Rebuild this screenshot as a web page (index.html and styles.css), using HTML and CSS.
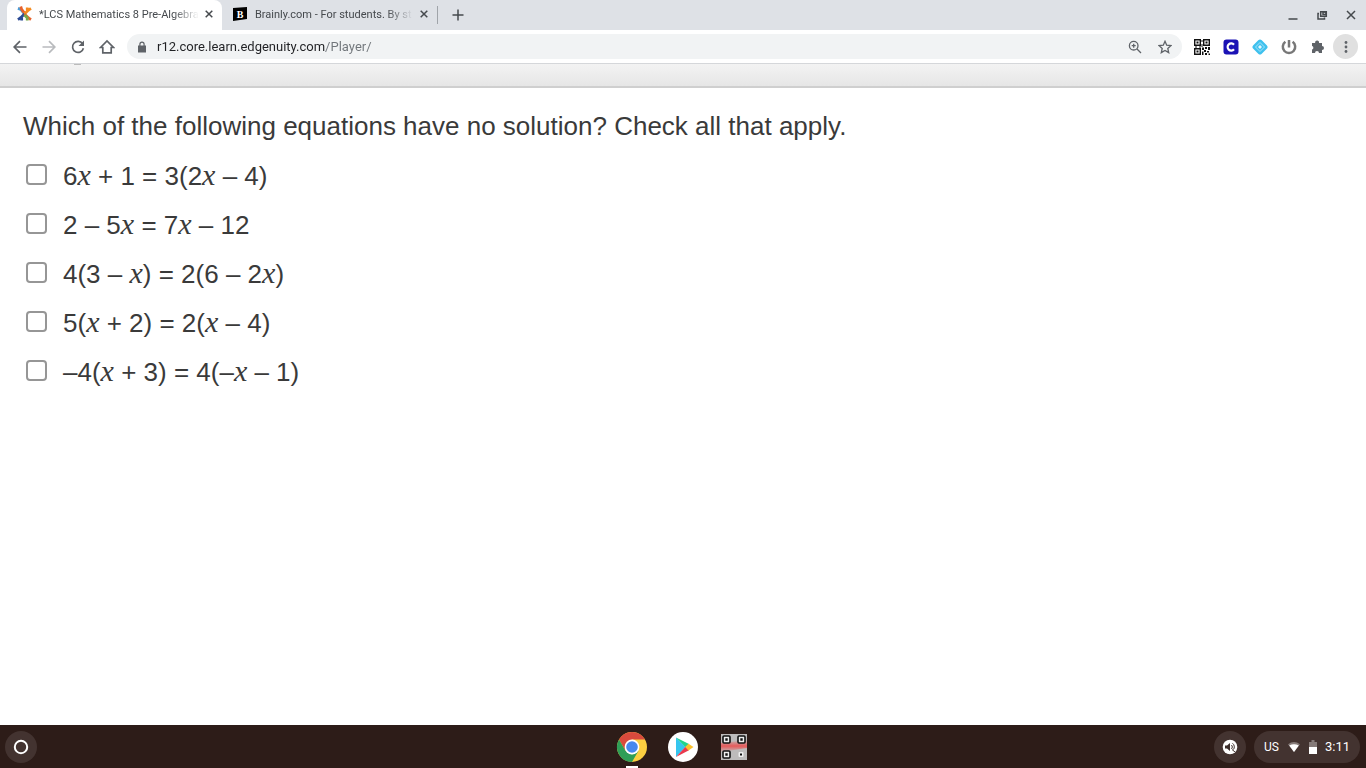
FILE: index.html
```html
<!DOCTYPE html>
<html lang="en">
<head>
    <meta charset="UTF-8">
    <meta name="viewport" content="width=device-width, initial-scale=1.0">
    <title>LCS Mathematics 8 Pre-Algebra</title>
    <link rel="stylesheet" href="styles.css">
</head>
<body>

<header class="tab-strip">
    <div class="tab active">
        <svg class="favicon" viewBox="0 0 16 16" fill="none" stroke-width="3">
            <path d="M1 2 4 3 8 8" stroke="#4b9bd6"/>
            <path d="M4 0 5 3 8 7" stroke="#e8622c"/>
            <path d="M15 2 12 4 8 8M11 1 11 4" stroke="#f58b1f"/>
            <path d="M1 14 4 12 8 8M5 15 5 12" stroke="#2b4a94"/>
            <path d="M15 14 12 12 8 8" stroke="#e8622c"/>
            <path d="M11 15 11 12 8 9" stroke="#79a94c"/>
        </svg>
        <span class="tab-title">*LCS Mathematics 8 Pre-Algebra</span>
        <button class="tab-close" aria-label="Close tab">
            <svg viewBox="0 0 8 8"><path d="M.7.7 7.3 7.3M7.3.7.7 7.3"/></svg>
        </button>
    </div>
    <div class="tab">
        <svg class="favicon" viewBox="0 0 16 16">
            <path d="M1 2 15 1V13L1 15Z" fill="#000"/>
            <text x="8" y="12" class="brainly-b">B</text>
        </svg>
        <span class="tab-title">Brainly.com - For students. By st</span>
        <button class="tab-close" aria-label="Close tab">
            <svg viewBox="0 0 8 8"><path d="M.7.7 7.3 7.3M7.3.7.7 7.3"/></svg>
        </button>
    </div>
    <button class="new-tab" aria-label="New tab">
        <svg viewBox="0 0 12 12"><path d="M6 .5V11.5M.5 6H11.5"/></svg>
    </button>
    <div class="window-buttons">
        <button aria-label="Minimize"><svg viewBox="0 0 12 12"><path d="M1.5 10H10.5"/></svg></button>
        <button aria-label="Restore"><svg viewBox="0 0 12 12"><path d="M4.7 2.7H10.3V7.3H4.7ZM3 4.5H2V10H8.5V8.5"/><path d="M7 3H10V5.5H7Z"/></svg></button>
        <button aria-label="Close"><svg viewBox="0 0 12 12"><path d="M2 2 10 10M10 2 2 10"/></svg></button>
    </div>
</header>

<nav class="toolbar">
    <div class="nav-buttons">
        <button aria-label="Back"><svg viewBox="0 0 16 16"><path d="M14.5 8H2.5M8 2.2 2.2 8 8 13.8"/></svg></button>
        <button class="off" aria-label="Forward" disabled><svg viewBox="0 0 16 16"><path d="M1.5 8H13.5M8 2.2 13.8 8 8 13.8"/></svg></button>
        <button aria-label="Reload"><svg viewBox="0 0 16 16"><path d="M12.6 4.8A5.5 5.5 0 1 0 13.4 9.2"/><path d="M14 1.5V7H8.5Z" fill="#5f6368" stroke="none"/></svg></button>
        <button aria-label="Home"><svg viewBox="0 0 16 16"><path d="M1.5 8.5 8 2 14.5 8.5H12.2V13.8H3.8V8.5Z"/></svg></button>
    </div>
    <div class="omnibox">
        <svg class="lock" viewBox="0 0 10 12"><path d="M1 4.5H9V11.5H1Z" fill="#5f6368"/><path d="M2.9 5V3.2A2.1 2.1 0 0 1 7.1 3.2V5" fill="none" stroke="#5f6368" stroke-width="1.2"/></svg>
        <input class="url" type="text" aria-label="Address" value="r12.core.learn.edgenuity.com/Player/">
        <button aria-label="Zoom"><svg viewBox="0 0 14 14"><circle cx="5.7" cy="5.7" r="4.3"/><path d="M9 9 13 13M3.7 5.7H7.7M5.7 3.7V7.7"/></svg></button>
        <button aria-label="Bookmark"><svg viewBox="0 0 14 14"><path d="M7 1.3 8.7 5.2 13 5.6 9.8 8.4 10.7 12.6 7 10.4 3.3 12.6 4.2 8.4 1 5.6 5.3 5.2Z"/></svg></button>
    </div>
    <div class="extensions">
        <button aria-label="QR code">
            <svg viewBox="0 0 16 16" fill="#111">
                <path fill-rule="evenodd" d="M0 0H7V7H0ZM1.4 1.4V5.6H5.6V1.4ZM9 0H16V7H9ZM10.4 1.4V5.6H14.6V1.4ZM0 9H7V16H0ZM1.4 10.4V14.6H5.6V10.4Z"/>
                <path d="M2.5 2.5H4.5V4.5H2.5ZM11.5 2.5H13.5V4.5H11.5ZM2.5 11.5H4.5V13.5H2.5ZM7.5 1H8.5V3H7.5ZM7.5 5H8.5V8H7.5ZM1 7.5H3V8.5H1ZM5 7.5H7V8.5H5ZM8 8.5H10V11H8ZM11 8H13V10H11ZM14 8H16V11H14ZM10 11H12V13H10ZM13 12H15V13.5H13ZM8 12.5H9.5V16H8ZM11 14H13V16H11ZM14.5 14.5H16V16H14.5Z"/>
            </svg>
        </button>
        <button aria-label="Clever">
            <svg viewBox="0 0 16 16"><rect x=".5" y=".5" width="15" height="15" rx="3" fill="#1b12b5"/><path d="M11 5.7A3.6 3.6 0 1 0 11 10.3" fill="none" stroke="#fff" stroke-width="2.2"/></svg>
        </button>
        <button aria-label="Diamond">
            <svg viewBox="0 0 16 16"><rect x="2" y="2" width="12" height="12" rx="2.5" transform="rotate(45 8 8)" fill="#3fc1ee"/><path d="M8 3.5 12.5 8 8 12.5 3.5 8Z" fill="none" stroke="#a5e3f8"/><path d="M8 6 10 8 8 10 6 8Z" fill="#e4f8ff"/></svg>
        </button>
        <button aria-label="Power">
            <svg viewBox="0 0 16 16" fill="none" stroke="#777" stroke-width="2.5"><path d="M4.4 2.8A6.2 6.2 0 1 0 11.6 2.8M8 1V8.5"/></svg>
        </button>
        <button aria-label="Extensions">
            <svg viewBox="0 0 16 16"><path d="M2 4H5.2A2 2 0 1 1 9 4H12V7A2 2 0 1 1 12 11V14H9A2 2 0 0 0 5 14H2V10.5A1.8 1.8 0 0 0 2 7Z" fill="#5f6368"/></svg>
        </button>
        <button class="menu" aria-label="Menu">
            <svg viewBox="0 0 16 16" fill="#5f6368"><circle cx="8" cy="3.5" r="1.4"/><circle cx="8" cy="8" r="1.4"/><circle cx="8" cy="12.5" r="1.4"/></svg>
        </button>
    </div>
</nav>

<div class="player-bar"></div>

<main class="question">
    <p class="prompt">Which of the following equations have no solution? Check all that apply.</p>
    <form>
        <label class="answer"><input type="checkbox"><span>6<i>x</i> + 1 = 3(2<i>x</i> – 4)</span></label>
        <label class="answer"><input type="checkbox"><span>2 – 5<i>x</i> = 7<i>x</i> – 12</span></label>
        <label class="answer"><input type="checkbox"><span>4(3 – <i>x</i>) = 2(6 – 2<i>x</i>)</span></label>
        <label class="answer"><input type="checkbox"><span>5(<i>x</i> + 2) = 2(<i>x</i> – 4)</span></label>
        <label class="answer"><input type="checkbox"><span>–4(<i>x</i> + 3) = 4(–<i>x</i> – 1)</span></label>
    </form>
</main>

<footer class="shelf">
    <div class="shelf-side">
        <button class="round" aria-label="Launcher">
            <svg viewBox="0 0 16 16"><circle cx="8" cy="8" r="6.2" fill="none" stroke="#fff" stroke-width="2"/></svg>
        </button>
    </div>
    <div class="apps">
        <button class="app running" aria-label="Chrome">
            <svg viewBox="0 0 32 32">
                <circle cx="16" cy="16" r="15" fill="#fbcf41"/>
                <path d="M3 8.5A15 15 0 0 1 29 8.5H16L9.5 19.8Z" fill="#d94a3d"/>
                <path d="M3 8.5A15 15 0 0 0 16 31L22.5 19.8 16 23.5 9.5 19.8Z" fill="#2e9e57"/>
                <circle cx="16" cy="16" r="7.4" fill="#fff"/>
                <circle cx="16" cy="16" r="5.8" fill="#4688ee"/>
            </svg>
        </button>
        <button class="app" aria-label="Play Store">
            <svg viewBox="0 0 32 32">
                <circle cx="16" cy="16" r="15" fill="#fff"/>
                <path d="M9 6.5V26L18.5 16Z" fill="#35c5ee"/>
                <path d="M9 6.5 22 13 18.5 16.3Z" fill="#22d48b"/>
                <path d="M9 26 22 19.3 18.5 15.8Z" fill="#e8394e"/>
                <path d="M21.5 12.8 26.5 16 21.5 19.5 18.2 16Z" fill="#fbc02d"/>
            </svg>
        </button>
        <button class="app" aria-label="QR scanner">
            <svg viewBox="0 0 32 32">
                <defs>
                    <linearGradient id="scan" x1="0" y1="0" x2="0" y2="1">
                        <stop offset="0" stop-color="#e65a5a" stop-opacity="0"/>
                        <stop offset=".5" stop-color="#e65a5a"/>
                        <stop offset="1" stop-color="#e65a5a" stop-opacity="0"/>
                    </linearGradient>
                </defs>
                <rect x="3" y="3" width="26" height="26" fill="#bdbbbb"/>
                <path d="M3 12 29 9V17L3 21Z" fill="url(#scan)"/>
                <g fill="#eee" stroke="#111" stroke-width="1.6">
                    <rect x="5" y="5" width="7" height="7" rx="1"/>
                    <rect x="20" y="5" width="7" height="7" rx="1"/>
                    <rect x="5" y="20" width="7" height="7" rx="1"/>
                </g>
                <path d="M7.3 7.3H9.7V9.7H7.3ZM22.3 7.3H24.7V9.7H22.3ZM7.3 22.3H9.7V24.7H7.3Z" fill="#111"/>
                <rect x="20.5" y="21" width="5" height="5" rx="1" fill="#eee"/>
                <path d="M22 22.5H24V24.5H22Z" fill="#111"/>
            </svg>
        </button>
    </div>
    <div class="shelf-side end">
        <button class="round" aria-label="Select to speak">
            <svg viewBox="0 0 16 16"><circle cx="8" cy="8" r="7.3" fill="#fff"/><path d="M3 6.5H5L8 4V12L5 9.5H3Z" fill="#3c2e2b"/><path d="M9.3 6A2.5 2.5 0 0 1 9.3 10M10.5 4.3A4.5 4.5 0 0 1 11.5 10.5M10 10.5 13 13" fill="none" stroke="#3c2e2b"/></svg>
        </button>
        <button class="status">
            <span class="keyboard">US</span>
            <svg class="wifi" viewBox="0 0 14 12"><path d="M1 3.2Q7-1 13 3.2L7 11Z" fill="#857a78"/><path d="M2.2 4.6Q7 2 11.8 4.6L7 11Z" fill="#fff"/></svg>
            <svg class="battery" viewBox="0 0 8 14"><path d="M0 2H2.5V0H5.5V2H8V14H0Z" fill="#857a78"/><path d="M0 7H8V14H0Z" fill="#fff"/></svg>
            <span>3:11</span>
        </button>
    </div>
</footer>

</body>
</html>
```
FILE: styles.css
```css
* {
    box-sizing: border-box;
}

body {
    margin: 0;
    min-height: 100vh;
    display: flex;
    flex-direction: column;
    font-family: Roboto, sans-serif;
    background-color: #fff;
}

button {
    display: flex;
    align-items: center;
    justify-content: center;
    padding: 0;
    border: none;
    background: none;
    font-family: inherit;
    cursor: pointer;
}

svg {
    display: block;
}

/* Tabs */
.tab-strip {
    display: flex;
    height: 30px;
    padding-left: 7px;
    background-color: #dee1e6;
}

.tab {
    display: flex;
    align-items: center;
    width: 215px;
    padding: 0 8px 2px 10px;
    border-radius: 8px 8px 0 0;
    color: #45494d;
    font-size: 11px;
}

.tab.active {
    background-color: #fff;
}

.favicon {
    width: 16px;
    height: 16px;
    margin-right: 7px;
}

.brainly-b {
    fill: #fff;
    font: bold 10px "Liberation Serif", serif;
    text-anchor: middle;
}

.tab-title {
    flex: 1;
    white-space: nowrap;
    -webkit-mask-image: linear-gradient(to right, #000 calc(100% - 26px), transparent);
    mask-image: linear-gradient(to right, #000 calc(100% - 26px), transparent);
}

.tab-close {
    width: 10px;
    height: 16px;
    margin-left: 6px;
}

.tab-close svg {
    width: 8px;
    height: 8px;
}

.tab-close path,
.new-tab path,
.window-buttons path {
    fill: none;
    stroke: #45494d;
    stroke-width: 1.5;
}

.new-tab {
    width: 41px;
    height: 18px;
    margin-top: 6px;
    border-left: 1px solid #a0a4a9;
}

.new-tab svg,
.window-buttons svg {
    width: 12px;
    height: 12px;
}

.window-buttons {
    display: flex;
    align-items: center;
    gap: 17px;
    margin-left: auto;
    padding-right: 9px;
}

/* Toolbar */
.toolbar {
    display: flex;
    align-items: center;
    height: 34px;
    padding: 0 8px 0 12px;
    border-bottom: 1px solid #d5d7da;
}

.nav-buttons {
    display: flex;
    gap: 13px;
    margin-right: 12px;
}

.nav-buttons svg,
.extensions svg {
    width: 16px;
    height: 16px;
}

.nav-buttons svg {
    fill: none;
    stroke: #5f6368;
    stroke-width: 1.7;
}

.nav-buttons .off svg {
    stroke: #b9bbbe;
}

.omnibox {
    flex: 1;
    display: flex;
    align-items: center;
    gap: 16px;
    height: 25px;
    padding: 0 10px;
    border-radius: 13px;
    background-color: #f1f3f4;
}

.lock {
    width: 10px;
    height: 12px;
}

/* Host is dark, path is grey */
.url {
    flex: 1;
    margin-left: -6px;
    padding: 0;
    border: none;
    outline: none;
    font-family: inherit;
    font-size: 13px;
    color: #202124;
    background: linear-gradient(to right, #202124 168px, #70757a 168px);
    -webkit-background-clip: text;
    background-clip: text;
    -webkit-text-fill-color: transparent;
}

.omnibox button svg {
    width: 14px;
    height: 14px;
    fill: none;
    stroke: #5f6368;
    stroke-width: 1.3;
}

.extensions {
    display: flex;
    align-items: center;
    gap: 13px;
    margin-left: 12px;
}

.extensions .menu {
    width: 25px;
    height: 25px;
    margin-left: -6px;
    border-radius: 50%;
    background-color: #e0e0e0;
}

/* Page */
.player-bar {
    height: 24px;
    padding-left: 74px;
    border-bottom: 2px solid #cfcfcf;
    background: linear-gradient(#f3f3f3, #e6e6e6);
}

.player-bar::before {
    content: "";
    display: block;
    width: 7px;
    height: 1px;
    background-color: #bbb;
}

.question {
    flex: 1;
    padding: 23px;
    color: #3a3a3a;
    font-family: "Liberation Sans", Arial, sans-serif;
    font-size: 26px;
    line-height: 30px;
}

.prompt {
    margin: 0 0 20px;
}

.answer {
    display: flex;
    align-items: center;
    width: fit-content;
    margin-bottom: 19px;
}

.answer input {
    appearance: none;
    width: 21px;
    height: 21px;
    margin: 0 16px 3px 3px;
    border: 2px solid #969696;
    border-radius: 4px;
    background-color: #fff;
}

.answer input:checked {
    background-color: #1a73e8;
}

.answer i {
    font-family: "Liberation Serif", "Times New Roman", serif;
    font-size: 30px;
    line-height: 0;
}

/* Shelf */
.shelf {
    display: flex;
    align-items: center;
    height: 43px;
    padding: 0 6px 0 5px;
    background-color: #2d1c18;
}

.shelf-side {
    flex: 1;
    display: flex;
    gap: 8px;
}

.shelf-side.end {
    justify-content: flex-end;
}

.round {
    width: 32px;
    height: 32px;
    border-radius: 50%;
    background-color: #433330;
}

.round svg {
    width: 16px;
    height: 16px;
}

.apps {
    display: flex;
    gap: 19px;
}

.app {
    height: 43px;
    padding-top: 2px;
    border-bottom: 2px solid transparent;
}

.app svg {
    width: 32px;
    height: 32px;
}

.running {
    border-image: linear-gradient(to right, transparent 11px, #fff 11px, #fff 21px, transparent 21px) 2;
    border-width: 0 0 2px;
}

.status {
    gap: 8px;
    height: 32px;
    padding: 0 10px;
    border-radius: 16px;
    background-color: #433330;
    color: #fff;
    font-size: 13px;
}

.keyboard {
    font-size: 12px;
}

.wifi {
    width: 14px;
    height: 12px;
}

.battery {
    width: 8px;
    height: 14px;
}
```
